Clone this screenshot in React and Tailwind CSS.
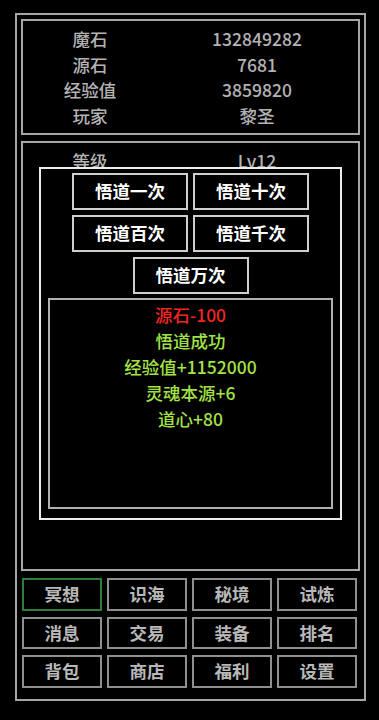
const stats = [
  ['魔石', '132849282'],
  ['源石', '7681'],
  ['经验值', '3859820'],
  ['玩家', '黎圣'],
]

const actions = ['悟道一次', '悟道十次', '悟道百次', '悟道千次']

const logs = [
  { text: '源石-100', color: 'text-[#f22525]' },
  { text: '悟道成功', color: 'text-[#a3e246]' },
  { text: '经验值+1152000', color: 'text-[#a3e246]' },
  { text: '灵魂本源+6', color: 'text-[#a3e246]' },
  { text: '道心+80', color: 'text-[#a3e246]' },
]

const menu = ['冥想', '识海', '秘境', '试炼', '消息', '交易', '装备', '排名', '背包', '商店', '福利', '设置']

function StatRow({ label, value }) {
  return (
    <div className="flex h-[25.8px] items-center text-[17.5px] font-medium text-[#b3b3b3]">
      <span className="w-[134px] text-center">{label}</span>
      <span className="ml-[33px] w-[134px] text-center">{value}</span>
    </div>
  )
}

export default function App() {
  return (
    <div
      className="h-[720px] w-full bg-black pt-[13px] pl-[15px]"
      style={{ fontFamily: '"Noto Sans CJK SC", "Noto Sans", sans-serif' }}
    >
      {/* 外框 */}
      <div className="h-[688px] w-[351px] border-2 border-[#a6a6a6] p-[4px]">
        {/* 资源 */}
        <div className="h-[116px] border-2 border-[#a6a6a6] pt-[5px]">
          {stats.map(([l, v]) => (
            <StatRow key={l} label={l} value={v} />
          ))}
        </div>

        {/* 主区域 */}
        <div className="relative mt-[6px] h-[430px] border-2 border-[#a6a6a6] pt-[5px]">
          <StatRow label="等级" value="Lv12" />

          {/* 悟道弹窗 */}
          <div className="absolute top-[24px] left-[16px] flex h-[353px] w-[303px] flex-col items-center border-2 border-[#ececec] bg-black px-[7px] pt-[4px] pb-[9px]">
            <div className="grid grid-cols-[116px_116px] gap-x-[5px] gap-y-[5px]">
              {actions.map((a) => (
                <button
                  key={a}
                  type="button"
                  className="h-[37px] border-2 border-[#cfcfcf] text-[17.5px] font-bold text-white"
                >
                  {a}
                </button>
              ))}
            </div>
            <button
              type="button"
              className="mt-[5px] h-[37px] w-[116px] border-2 border-[#cfcfcf] text-[17.5px] font-bold text-white"
            >
              悟道万次
            </button>

            {/* 日志 */}
            <div className="mt-[4px] w-full flex-1 border-2 border-[#b0b0b0] pt-[2px]">
              {logs.map((l) => (
                <p key={l.text} className={`h-[26px] text-center text-[17.5px] leading-[26px] font-medium ${l.color}`}>
                  {l.text}
                </p>
              ))}
            </div>
          </div>
        </div>

        {/* 菜单 */}
        <div className="mt-[7px] grid grid-cols-4 gap-x-[5px] gap-y-[6px] pr-[3px] pl-[1px]">
          {menu.map((m, i) => (
            <button
              key={m}
              type="button"
              className={`h-[32.5px] border-2 text-[17.5px] font-bold text-[#b8b8b8] ${
                i === 0 ? 'border-[#2f7d3a]' : 'border-[#8f8f8f]'
              }`}
            >
              {m}
            </button>
          ))}
        </div>
      </div>
    </div>
  )
}
